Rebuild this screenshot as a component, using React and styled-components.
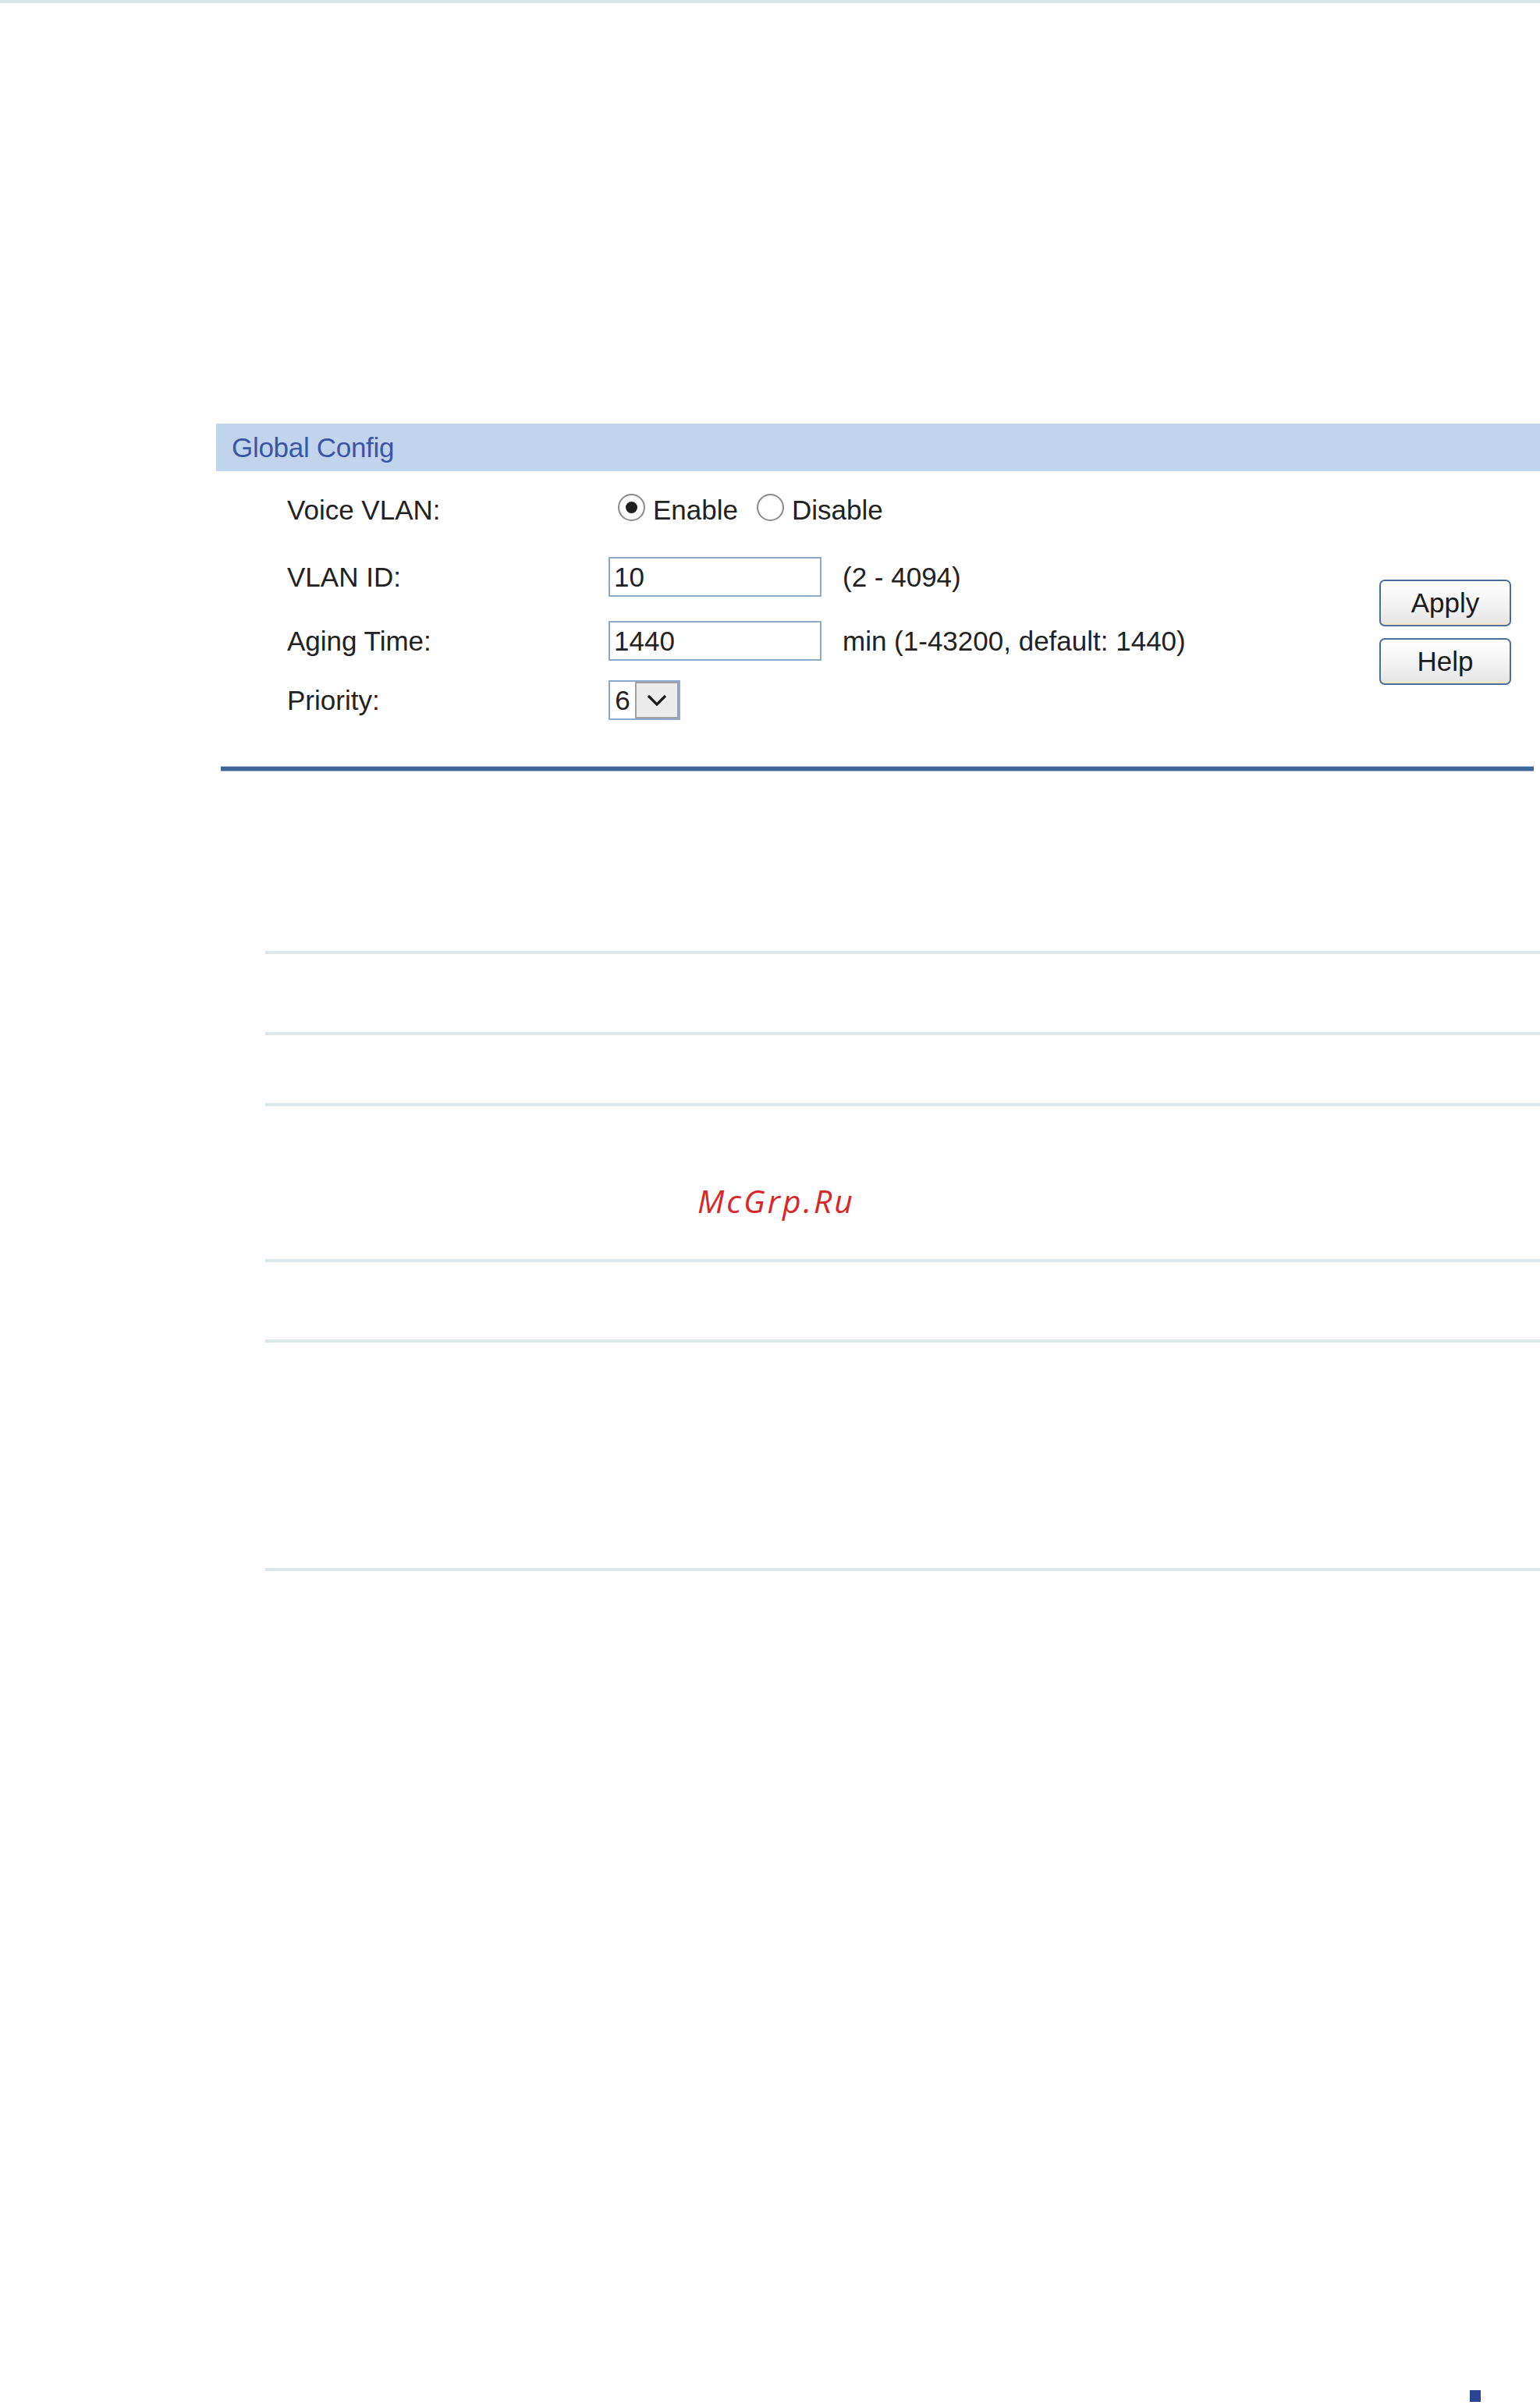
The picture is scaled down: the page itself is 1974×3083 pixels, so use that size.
import React from 'react';
import styled, { createGlobalStyle } from 'styled-components';

const GlobalStyle = createGlobalStyle`
  html, body {
    margin: 0;
    padding: 0;
    background: #fff;
  }
  body {
    font-family: "Liberation Sans", Arial, sans-serif;
    color: #222;
  }
`;

const Page = styled.div`
  width: 1974px;
  min-height: 3083px;
  display: flex;
  flex-direction: column;
  box-sizing: border-box;
`;

const TopRule = styled.div`
  height: 4px;
  background: #dbe6eb;
`;

const Panel = styled.section`
  margin: 539px 0 0 277px;
`;

const PanelHeader = styled.div`
  height: 61px;
  display: flex;
  align-items: center;
  padding-left: 20px;
  background: #c0d4ee;
  color: #3b57a3;
  font-size: 35px;
  letter-spacing: -0.3px;
`;

const PanelBody = styled.div`
  display: flex;
  justify-content: space-between;
  padding: 24px 37px 59px 91px;
`;

const Fields = styled.div`
  display: flex;
  flex-direction: column;
`;

const Row = styled.div`
  display: flex;
  align-items: center;
  height: 51px;
  margin-top: ${p => p.$gap || 0}px;
  font-size: 35px;
`;

const Label = styled.div`
  width: 412px;
  flex-shrink: 0;
`;

const RadioGroup = styled.div`
  display: flex;
  align-items: center;
  padding-left: 12px;
`;

const Radio = styled.span`
  width: 35px;
  height: 35px;
  border-radius: 50%;
  border: 2px solid #8b8b8b;
  box-sizing: border-box;
  background: radial-gradient(circle, #fff 55%, #e6e6e6 100%);
  display: inline-flex;
  align-items: center;
  justify-content: center;
  margin-right: 10px;
  margin-top: -6px;
  margin-left: ${p => p.$offset || 0}px;

  &::after {
    content: "";
    width: 15px;
    height: 15px;
    border-radius: 50%;
    background: #1e1e1e;
    display: ${p => (p.$checked ? 'block' : 'none')};
  }
`;

const TextInput = styled.div`
  width: 273px;
  height: 51px;
  box-sizing: border-box;
  border: 2px solid #8ea9c9;
  padding-left: 5px;
  display: flex;
  align-items: center;
  background: #fff;
`;

const Hint = styled.span`
  margin-left: 27px;
`;

const Select = styled.div`
  width: 92px;
  height: 51px;
  box-sizing: border-box;
  border: 2px solid #8ea9c9;
  display: flex;
  background: #fff;
`;

const SelectValue = styled.span`
  width: 32px;
  display: flex;
  align-items: center;
  justify-content: center;
`;

const SelectArrow = styled.span`
  flex: 1;
  background: #ececec;
  border: 2px solid #a3a3a3;
  display: flex;
  align-items: center;
  justify-content: center;
`;

const Buttons = styled.div`
  display: flex;
  flex-direction: column;
  gap: 15px;
  margin-top: 115px;
`;

const Button = styled.button`
  width: 169px;
  height: 60px;
  box-sizing: border-box;
  border: 2px solid #4b6e9c;
  border-radius: 7px;
  background: linear-gradient(#ffffff, #f1f1f1 60%, #e4e4e4);
  box-shadow: inset 0 -6px 0 -4px #f3e6c0;
  font-family: "Liberation Sans", Arial, sans-serif;
  font-size: 35px;
  color: #1c1c1c;
  padding: 0;
  cursor: pointer;
`;

const BlueRule = styled.div`
  margin: 0 8px 0 283px;
  height: 5px;
  background: #3e6899;
  border-top: 1px solid #a6bcd6;
  border-bottom: 1px solid #a6bcd6;
`;

const Table = styled.div`
  margin: 230px 0 0 340px;
  display: flex;
  flex-direction: column;
`;

const TableRow = styled.div`
  height: ${p => p.$h}px;
  box-sizing: border-box;
  border-top: 4px solid #dce7ea;
  display: flex;
  align-items: flex-start;
`;

const TableEnd = styled.div`
  border-top: 4px solid #dce7ea;
`;

const Watermark = styled.span`
  margin: 101px 0 0 554px;
  font-family: "Open Sans", "DejaVu Sans", sans-serif;
  font-style: italic;
  font-size: 41px;
  line-height: 1;
  letter-spacing: 3px;
  color: #d8262c;
`;

const Footer = styled.div`
  margin-top: auto;
  display: flex;
  justify-content: flex-end;
  padding: 0 76px 4px 0;
`;

const PageMark = styled.span`
  width: 14px;
  height: 15px;
  background: #2b4393;
`;

const Chevron = () => (
  <svg width="28" height="18" viewBox="0 0 28 18">
    <path d="M3 3 L14 14 L25 3" fill="none" stroke="#1a1a1a" strokeWidth="3.2" />
  </svg>
);

export default function App() {
  return (
    <Page>
      <GlobalStyle />
      <TopRule />
      <Panel>
        <PanelHeader>Global Config</PanelHeader>
        <PanelBody>
          <Fields>
            <Row>
              <Label>Voice VLAN:</Label>
              <RadioGroup>
                <Radio $checked />
                <span>Enable</span>
                <Radio $offset={24} />
                <span>Disable</span>
              </RadioGroup>
            </Row>
            <Row $gap={35}>
              <Label>VLAN ID:</Label>
              <TextInput>10</TextInput>
              <Hint>(2 - 4094)</Hint>
            </Row>
            <Row $gap={31}>
              <Label>Aging Time:</Label>
              <TextInput>1440</TextInput>
              <Hint>min (1-43200, default: 1440)</Hint>
            </Row>
            <Row $gap={25}>
              <Label>Priority:</Label>
              <Select>
                <SelectValue>6</SelectValue>
                <SelectArrow>
                  <Chevron />
                </SelectArrow>
              </Select>
            </Row>
          </Fields>
          <Buttons>
            <Button>Apply</Button>
            <Button>Help</Button>
          </Buttons>
        </PanelBody>
      </Panel>
      <BlueRule />
      <Table>
        <TableRow $h={104} />
        <TableRow $h={91} />
        <TableRow $h={200}>
          <Watermark>McGrp.Ru</Watermark>
        </TableRow>
        <TableRow $h={103} />
        <TableRow $h={293} />
        <TableEnd />
      </Table>
      <Footer>
        <PageMark />
      </Footer>
    </Page>
  );
}
